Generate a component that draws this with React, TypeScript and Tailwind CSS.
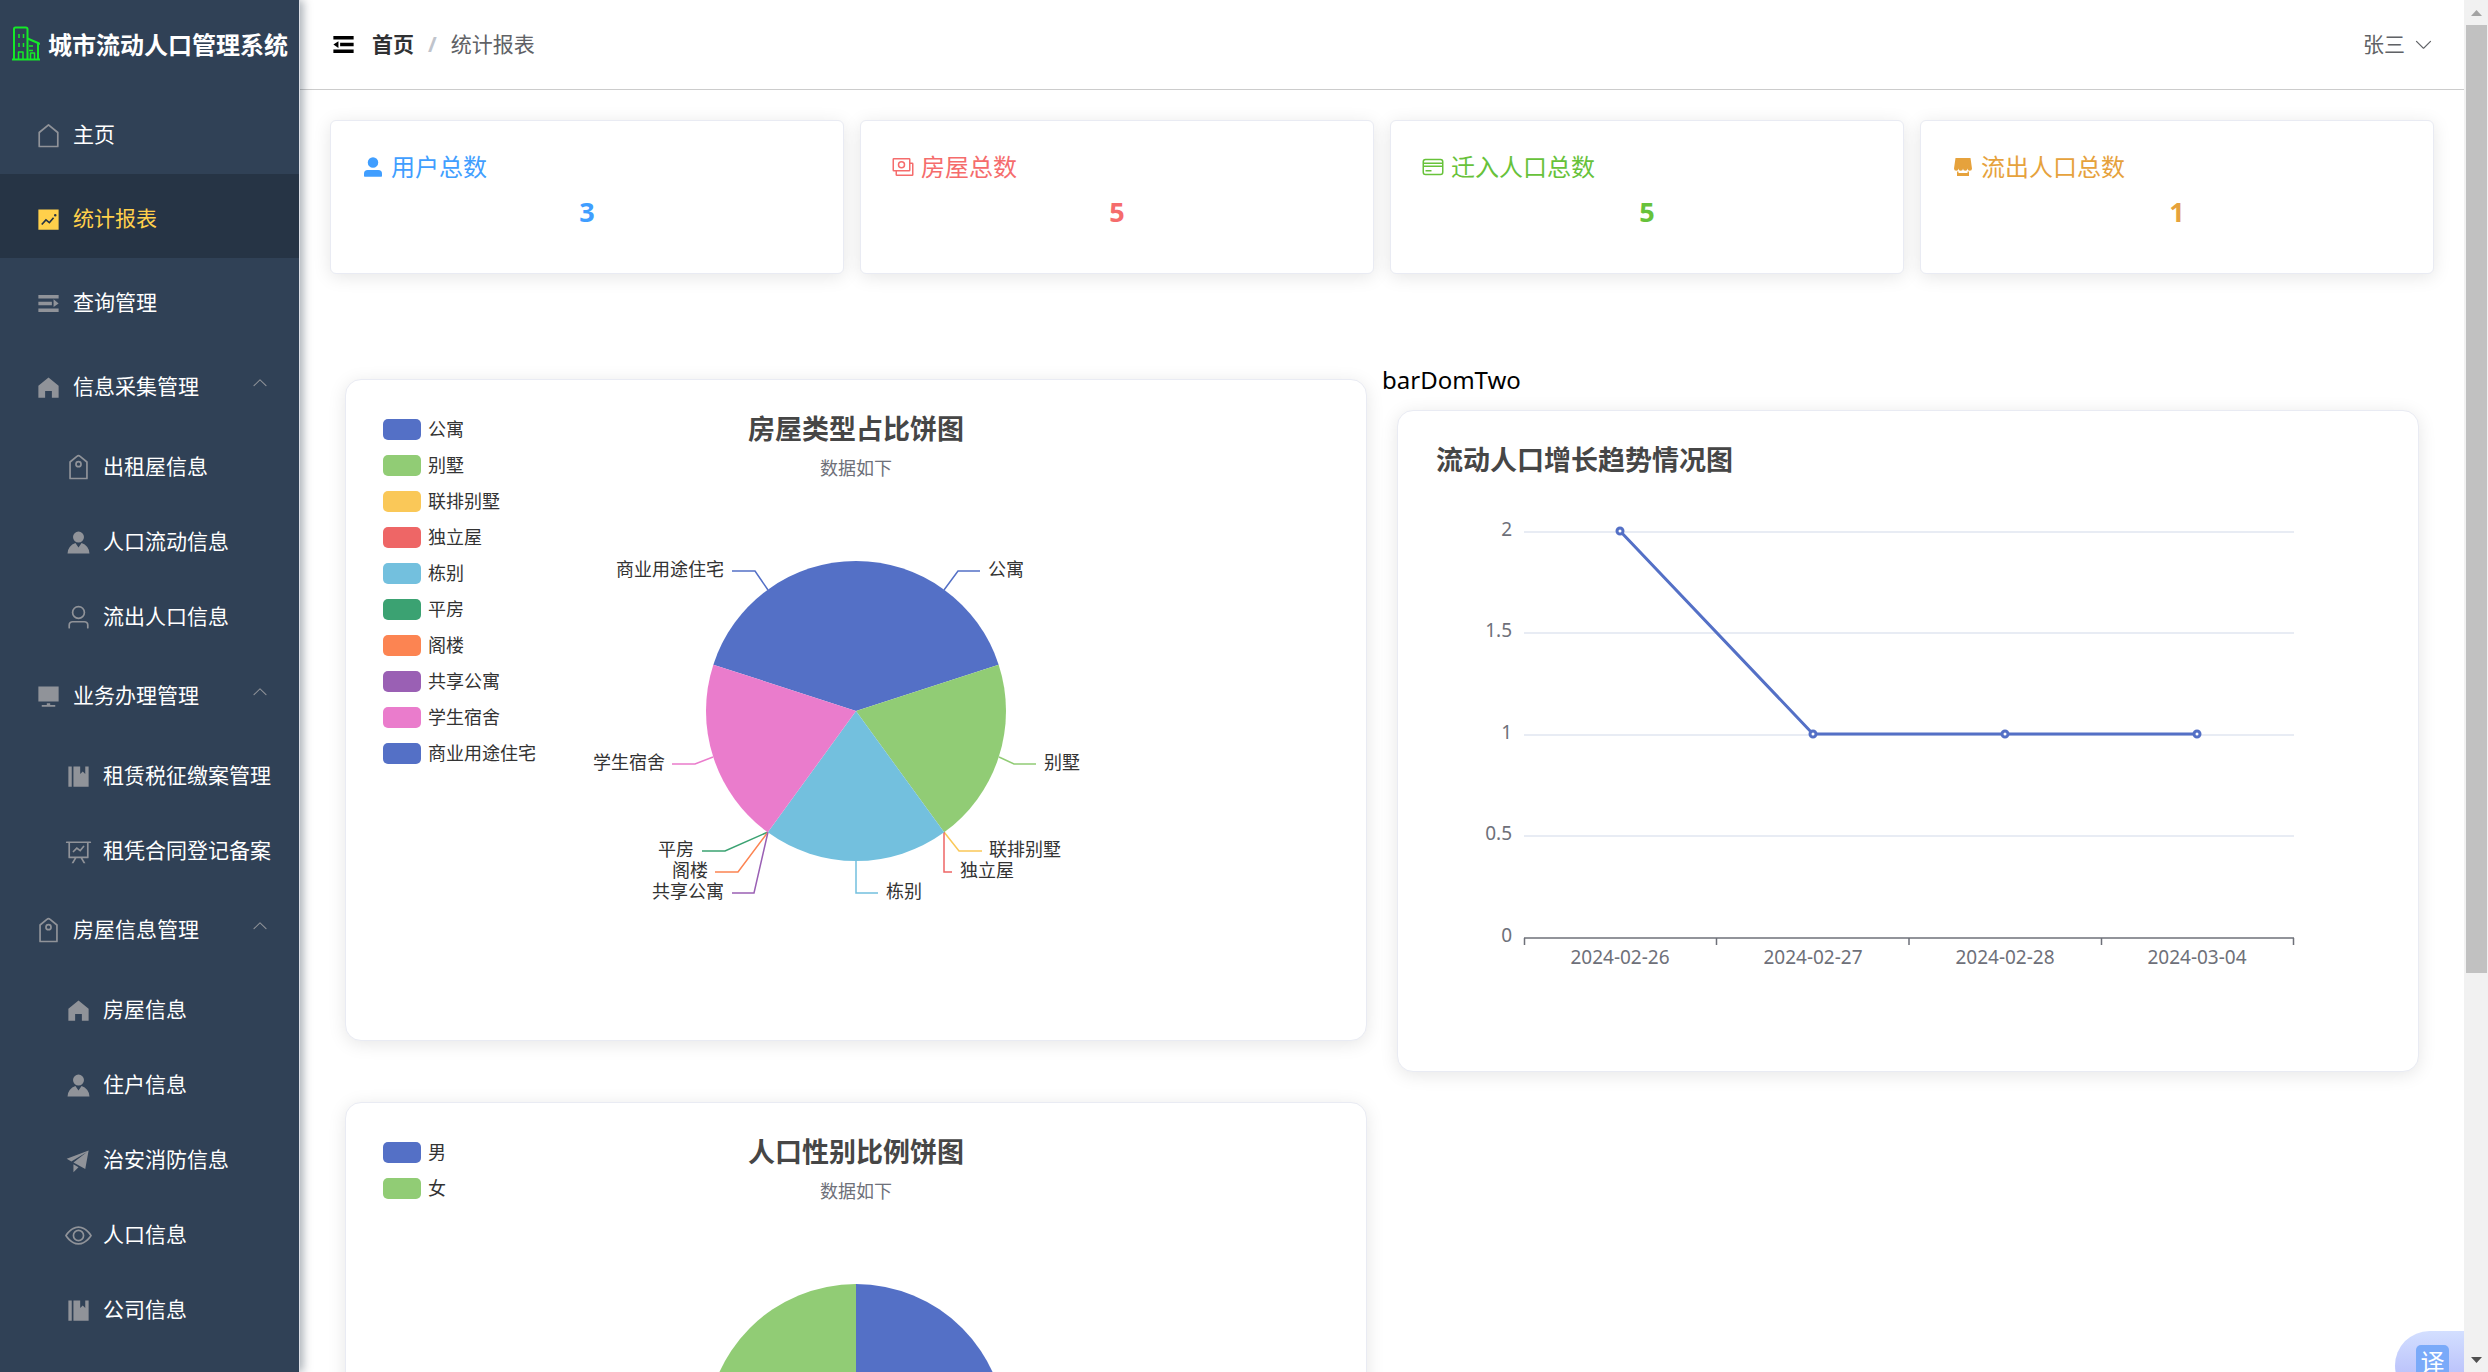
import React from "react";

const FONT = "font-['Noto_Sans','Noto_Sans_CJK_SC',sans-serif]";

const PATHS = {
  house:
    "M192 413.952V896h640V413.952L512 147.328 192 413.952zM139.52 374.4l352-293.312a32 32 0 0 1 40.96 0l352 293.312A32 32 0 0 1 896 398.976V928a32 32 0 0 1-32 32H160a32 32 0 0 1-32-32V398.976a32 32 0 0 1 11.52-24.576z",
  homeFilled: "M512 128 128 447.936V896h255.936V640H640v256h255.936V447.936z",
  trend:
    "M128 896V128h768v768H128zm291.712-327.296 128 102.4 180.16-201.792-47.744-42.624-139.84 156.608-128-102.4-180.16 201.792 47.744 42.624 139.84-156.608zM816 352a48 48 0 1 0-96 0 48 48 0 0 0 96 0z",
  expand:
    "M128 192h768v128H128V192zm0 256h512v128H128V448zm0 256h768v128H128V704zm576-352 192 160-192 128V352z",
  fold: "M896 192H128v128h768V192zm0 256H384v128h512V448zm0 256H128v128h768V704zM320 384 128 512l192 128V384z",
  priceTag:
    "M224 318.336V896h576V318.336L552.512 115.84a64 64 0 0 0-81.024 0L224 318.336zM593.024 66.304l259.2 212.096A32 32 0 0 1 864 303.168V928a32 32 0 0 1-32 32H192a32 32 0 0 1-32-32V303.168a32 32 0 0 1 11.712-24.768l259.2-212.096a128 128 0 0 1 162.112 0zM512 448a64 64 0 1 0 0-128 64 64 0 0 0 0 128zm0 64a128 128 0 1 1 0-256 128 128 0 0 1 0 256z",
  avatar:
    "M628.736 528.896A416 416 0 0 1 928 928H96a415.872 415.872 0 0 1 299.264-399.104L512 704l116.736-175.104zM720 304a208 208 0 1 1-416 0 208 208 0 0 1 416 0z",
  user: "M512 512a192 192 0 1 0 0-384 192 192 0 0 0 0 384zm0 64a256 256 0 1 1 0-512 256 256 0 0 1 0 512zm320 320v-96a96 96 0 0 0-96-96H288a96 96 0 0 0-96 96v96a32 32 0 1 1-64 0v-96a160 160 0 0 1 160-160h448a160 160 0 0 1 160 160v96a32 32 0 1 1-64 0z",
  platform:
    "M448 832v-64h128v64h192v64H256v-64h192zM128 704V128h768v576H128z",
  management:
    "M576 128v288l96-96 96 96V128h128v768H320V128h256zm-448 0h128v768H128V128z",
  dataLine:
    "M359.168 768H160a32 32 0 0 1-32-32V192H64a32 32 0 0 1 0-64h896a32 32 0 1 1 0 64h-64v544a32 32 0 0 1-32 32H665.216l110.848 192h-73.856L591.36 768H433.024L322.176 960H248.32l110.848-192zM832 192H192v512h640V192zM342.656 534.656a32 32 0 1 1-45.312-45.312L444.992 341.76l125.44 94.08L679.04 300.032a32 32 0 1 1 49.92 39.936L581.632 524.224 451.008 426.24 342.656 534.592z",
  promotion:
    "m64 448 832-320-128 704-446.08-243.328L832 192 242.816 545.472 64 448zm256 512V657.024L512 768 320 960z",
  view: "M512 160c320 0 512 352 512 352S832 864 512 864 0 512 0 512s192-352 512-352zm0 64c-225.28 0-384.128 208.064-436.8 288 52.608 79.872 211.456 288 436.8 288 225.28 0 384.128-208.064 436.8-288-52.608-79.872-211.456-288-436.8-288zm0 64a224 224 0 1 1 0 448 224 224 0 0 1 0-448zm0 64a160.192 160.192 0 0 0-160 160c0 88.192 71.744 160 160 160s160-71.808 160-160-71.744-160-160-160z",
  arrowDown:
    "M831.872 340.864 512 652.672 192.128 340.864a30.592 30.592 0 0 0-42.752 0 29.12 29.12 0 0 0 0 41.6L489.664 714.24a32 32 0 0 0 44.672 0l340.288-331.712a29.12 29.12 0 0 0 0-41.728 30.592 30.592 0 0 0-42.752 0z",
  userFilled:
    "M288 320a224 224 0 1 0 448 0 224 224 0 1 0-448 0zm544 608H160a32 32 0 0 1-32-32v-96a160 160 0 0 1 160-160h448a160 160 0 0 1 160 160v96a32 32 0 0 1-32 32z",
  shop: "M704 704h64v192H256V704h64v64h384v-64zm188.544-152.192C894.528 559.616 896 567.616 896 576a96 96 0 1 1-192 0 96 96 0 1 1-192 0 96 96 0 1 1-192 0 96 96 0 1 1-192 0c0-8.384 1.408-16.384 3.392-24.192L192 128h640l60.544 423.808z",
};

type IconName = keyof typeof PATHS;

function Icon({ name, className }: { name: IconName; className: string }) {
  return (
    <svg viewBox="0 0 1024 1024" fill="currentColor" aria-hidden="true" className={className}>
      <path d={PATHS[name]} />
    </svg>
  );
}

function MoneyIcon() {
  return (
    <svg viewBox="0 0 1024 1024" fill="none" stroke="currentColor" strokeWidth="64" aria-hidden="true" className="size-6 shrink-0">
      <rect x="96" y="160" width="704" height="512" rx="24" />
      <circle cx="448" cy="416" r="128" />
      <path d="M224 680v160a24 24 0 0 0 24 24h656a24 24 0 0 0 24-24V376a24 24 0 0 0-24-24H808" />
    </svg>
  );
}

function CardIcon() {
  return (
    <svg viewBox="0 0 1024 1024" fill="none" stroke="currentColor" strokeWidth="64" aria-hidden="true" className="size-6 shrink-0">
      <rect x="96" y="192" width="832" height="640" rx="96" />
      <path d="M96 352h832M96 480h832M192 672h256" />
    </svg>
  );
}

function Logo() {
  return (
    <svg viewBox="0 0 28 35" fill="none" stroke="#14ea28" strokeWidth="2" strokeLinejoin="round" aria-hidden="true" className="mb-[3px] h-[35px] w-7 shrink-0">
      <path d="M0 33.500h28" />
      <path d="M2 33V3a1.500 1.500 0 0 1 1.500-1.500h10.500a1.500 1.500 0 0 1 1.500 1.500v30" />
      <path d="M15.500 12.500 26 17v16" />
      <path d="M26 17l2 1" />
      <path d="M6.500 33v-7h4.500v7M18.500 33v-6h4v6" strokeWidth="1.500" />
      <path d="M7 8v4M11.500 8v4M7 17v4M11.500 17v4M17 20h4M17 24.500h4" strokeWidth="1.500" />
    </svg>
  );
}

type Leaf = { label: string; icon: IconName; active?: boolean };
type Entry = Leaf & { children?: Leaf[] };

const MENU: Entry[] = [
  { label: "主页", icon: "house" },
  { label: "统计报表", icon: "trend", active: true },
  { label: "查询管理", icon: "expand" },
  {
    label: "信息采集管理",
    icon: "homeFilled",
    children: [
      { label: "出租屋信息", icon: "priceTag" },
      { label: "人口流动信息", icon: "avatar" },
      { label: "流出人口信息", icon: "user" },
    ],
  },
  {
    label: "业务办理管理",
    icon: "platform",
    children: [
      { label: "租赁税征缴案管理", icon: "management" },
      { label: "租凭合同登记备案", icon: "dataLine" },
    ],
  },
  {
    label: "房屋信息管理",
    icon: "priceTag",
    children: [
      { label: "房屋信息", icon: "homeFilled" },
      { label: "住户信息", icon: "avatar" },
      { label: "治安消防信息", icon: "promotion" },
      { label: "人口信息", icon: "view" },
      { label: "公司信息", icon: "management" },
    ],
  },
];

function MenuLabel({ icon, label, active }: Leaf) {
  return (
    <>
      <span className="flex w-9 shrink-0 justify-center">
        <Icon name={icon} className={active ? "size-[27px]" : "size-[27px] text-[#909399]"} />
      </span>
      <span className="ml-[7px] whitespace-nowrap">{label}</span>
    </>
  );
}

function Sidebar() {
  return (
    <aside className="z-10 w-[300px] shrink-0 overflow-hidden border-r border-[#dcdfe6] bg-[#304156] text-[21px] text-white shadow-[3px_0_9px_rgba(0,21,41,0.35)]">
      <div className="flex h-[90px] items-center gap-2 pl-3">
        <Logo />
        <h1 className="text-2xl font-bold whitespace-nowrap">城市流动人口管理系统</h1>
      </div>
      <nav>
        <ul>
          {MENU.map((entry) => (
            <li key={entry.label}>
              {entry.children ? (
                <>
                  <button type="button" aria-expanded="true" className="flex h-[84px] w-full items-center px-[30px] pt-[6px] text-left">
                    <MenuLabel {...entry} />
                    <Icon name="arrowDown" className="mb-2 ml-auto size-[18px] rotate-180 text-[#909399]" />
                  </button>
                  <ul>
                    {entry.children.map((leaf) => (
                      <li key={leaf.label}>
                        <a href="#" className="flex h-[75px] items-center pt-[7px] pl-[60px]">
                          <MenuLabel {...leaf} />
                        </a>
                      </li>
                    ))}
                  </ul>
                </>
              ) : (
                <a
                  href="#"
                  className={
                    entry.active
                      ? "flex h-[84px] items-center bg-[#263445] px-[30px] pt-[6px] text-[#ffd04b]"
                      : "flex h-[84px] items-center px-[30px] pt-[6px]"
                  }
                >
                  <MenuLabel {...entry} />
                </a>
              )}
            </li>
          ))}
        </ul>
      </nav>
    </aside>
  );
}

function Header() {
  return (
    <header className="flex h-[90px] items-center justify-between border-b border-[#ccc] px-[30px] text-[21px] text-[#606266]">
      <div className="flex items-center">
        <button type="button" aria-label="折叠菜单" className="text-black">
          <Icon name="fold" className="size-[27px]" />
        </button>
        <nav className="ml-[15px] flex items-center">
          <a href="#" className="font-bold text-[#303133]">首页</a>
          <span className="mx-[14px] font-bold text-[#c0c4cc]">/</span>
          <span>统计报表</span>
        </nav>
      </div>
      <button type="button" className="flex items-center gap-2">
        张三
        <Icon name="arrowDown" className="size-[21px]" />
      </button>
    </header>
  );
}

const STATS = [
  { label: "用户总数", value: 3, color: "text-[#409eff]", icon: <Icon name="userFilled" className="size-6 shrink-0" /> },
  { label: "房屋总数", value: 5, color: "text-[#f56c6c]", icon: <MoneyIcon /> },
  { label: "迁入人口总数", value: 5, color: "text-[#67c23a]", icon: <CardIcon /> },
  { label: "流出人口总数", value: 1, color: "text-[#e6a23c]", icon: <Icon name="shop" className="size-6 shrink-0" /> },
];

function Stats() {
  return (
    <section className="grid grid-cols-4 gap-4">
      {STATS.map((s) => (
        <div key={s.label} className="min-h-[154px] rounded-md border border-[#e9ebf3] bg-white p-[30px] pb-0 shadow-[0_3px_18px_rgba(0,0,0,0.1)]">
          <div className={s.color}>
            <p className="flex items-center gap-[6px] text-2xl leading-[31px]">
              {s.icon}
              {s.label}
            </p>
            <p className="mt-3 text-center text-[27px] leading-9 font-bold">{s.value}</p>
          </div>
        </div>
      ))}
    </section>
  );
}

function ChartCard({ children }: { children: React.ReactNode }) {
  return (
    <article className="m-[15px] min-h-[662px] rounded-2xl border border-[#e9ebf3] bg-white px-[31px] py-[31px] shadow-[0_3px_18px_rgba(0,0,0,0.1)]">
      {children}
    </article>
  );
}

type LegendItem = { label: string; color: string };

function PieCard({ title, legend, children }: { title: string; legend: LegendItem[]; children: React.ReactNode }) {
  return (
    <ChartCard>
      <div className="grid">
        <ul className="z-10 col-start-1 row-start-1 self-start justify-self-start pl-[6px]">
          {legend.map((item) => (
            <li key={item.label} className="flex h-9 items-center gap-[7px] text-lg leading-6 text-[#333]">
              <span className="h-[21px] w-[38px] rounded-[5px]" style={{ backgroundColor: item.color }} />
              {item.label}
            </li>
          ))}
        </ul>
        <div className="col-start-1 row-start-1 flex flex-col items-center">
          <h2 className="text-[27px] leading-9 font-bold text-[#464646]">{title}</h2>
          <p className="mt-2 text-lg leading-[26px] text-[#6e7079]">数据如下</p>
          <svg viewBox="-290 -210 580 420" className="mt-5 h-[420px] w-[580px] text-lg">
            {children}
          </svg>
        </div>
      </div>
    </ChartCard>
  );
}

const HOUSE_LEGEND: LegendItem[] = [
  { label: "公寓", color: "#5470c6" },
  { label: "别墅", color: "#91cc75" },
  { label: "联排别墅", color: "#fac858" },
  { label: "独立屋", color: "#ee6666" },
  { label: "栋别", color: "#73c0de" },
  { label: "平房", color: "#3ba272" },
  { label: "阁楼", color: "#fc8452" },
  { label: "共享公寓", color: "#9a60b4" },
  { label: "学生宿舍", color: "#ea7ccc" },
  { label: "商业用途住宅", color: "#5470c6" },
];

const SLICES = [
  { from: -72, to: 72, color: "#5470c6" },
  { from: 72, to: 144, color: "#91cc75" },
  { from: 144, to: 216, color: "#73c0de" },
  { from: 216, to: 288, color: "#ea7ccc" },
];

const LEADERS = [
  { label: "公寓", color: "#5470c6", points: "88,-121 102,-140 124,-140", x: 132, y: -141, end: false },
  { label: "别墅", color: "#91cc75", points: "143,46 158,53 180,53", x: 188, y: 52, end: false },
  { label: "联排别墅", color: "#fac858", points: "88,121 103,140 126,140", x: 133, y: 139, end: false },
  { label: "独立屋", color: "#ee6666", points: "88,121 88,161 96,161", x: 104, y: 160, end: false },
  { label: "栋别", color: "#73c0de", points: "0,150 0,182 22,182", x: 30, y: 181, end: false },
  { label: "平房", color: "#3ba272", points: "-88,121 -131,140 -154,140", x: -162, y: 139, end: true },
  { label: "阁楼", color: "#fc8452", points: "-88,121 -118,161 -141,161", x: -148, y: 160, end: true },
  { label: "共享公寓", color: "#9a60b4", points: "-88,121 -102,182 -124,182", x: -132, y: 181, end: true },
  { label: "学生宿舍", color: "#ea7ccc", points: "-143,46 -161,53 -184,53", x: -191, y: 52, end: true },
  { label: "商业用途住宅", color: "#5470c6", points: "-88,-121 -101,-140 -124,-140", x: -132, y: -141, end: true },
];

function slicePath(from: number, to: number) {
  const at = (deg: number) => {
    const a = (deg * Math.PI) / 180;
    return `${(150 * Math.sin(a)).toFixed(2)} ${(-150 * Math.cos(a)).toFixed(2)}`;
  };
  return `M0 0L${at(from)}A150 150 0 0 1 ${at(to)}Z`;
}

function HousePie() {
  return (
    <PieCard title="房屋类型占比饼图" legend={HOUSE_LEGEND}>
      {LEADERS.map((l) => (
        <g key={l.label}>
          <polyline points={l.points} fill="none" stroke={l.color} strokeWidth="1.5" />
          <text x={l.x} y={l.y + 6} textAnchor={l.end ? "end" : "start"} fill="#333">
            {l.label}
          </text>
        </g>
      ))}
      {SLICES.map((s) => (
        <path key={s.color} d={slicePath(s.from, s.to)} fill={s.color} />
      ))}
    </PieCard>
  );
}

function GenderPie() {
  return (
    <PieCard
      title="人口性别比例饼图"
      legend={[
        { label: "男", color: "#5470c6" },
        { label: "女", color: "#91cc75" },
      ]}
    >
      <path d={slicePath(0, 180)} fill="#5470c6" />
      <path d={slicePath(180, 360)} fill="#91cc75" />
    </PieCard>
  );
}

const GRID_ROWS = [
  { label: "2", y: 54 },
  { label: "1.5", y: 155 },
  { label: "1", y: 257 },
  { label: "0.5", y: 358 },
  { label: "0", y: 460 },
];

const DAYS = [
  { label: "2024-02-26", x: 191, y: 53 },
  { label: "2024-02-27", x: 384, y: 256 },
  { label: "2024-02-28", x: 576, y: 256 },
  { label: "2024-03-04", x: 768, y: 256 },
];

function TrendCard() {
  return (
    <ChartCard>
      <h2 className="px-[7px] text-[27px] leading-9 font-bold text-[#464646]">流动人口增长趋势情况图</h2>
      <svg viewBox="0 0 958 562" className="w-full text-[19px]">
        {GRID_ROWS.map((r) => (
          <g key={r.label}>
            <line x1="95" x2="865" y1={r.y} y2={r.y} stroke={r.y === 460 ? "#6e7079" : "#e0e6f1"} strokeWidth="1.5" />
            <text x="83" y={r.y + 4} textAnchor="end" fill="#6e7079">
              {r.label}
            </text>
          </g>
        ))}
        <path d="M95.500 460v7M287.500 460v7M480 460v7M672.500 460v7M864.500 460v7" stroke="#6e7079" strokeWidth="1.500" />
        <polyline points={DAYS.map((d) => `${d.x},${d.y}`).join(" ")} fill="none" stroke="#5470c6" strokeWidth="3" strokeLinejoin="bevel" />
        {DAYS.map((d) => (
          <g key={d.label}>
            <circle cx={d.x} cy={d.y} r="3" fill="#fff" stroke="#5470c6" strokeWidth="3" />
            <text x={d.x} y="486" textAnchor="middle" fill="#6e7079">
              {d.label}
            </text>
          </g>
        ))}
      </svg>
    </ChartCard>
  );
}

function ScrollRail() {
  return (
    <div aria-hidden="true" className="flex w-6 shrink-0 flex-col items-center bg-[#f1f1f1]">
      <svg viewBox="0 0 24 25" className="h-[25px] w-6" fill="#a3a3a3">
        <path d="M12.500 10 18 16H7z" />
      </svg>
      <div className="h-[69.1%] w-[21px] bg-[#c1c1c1]" />
      <svg viewBox="0 0 24 25" className="mt-auto h-[25px] w-6" fill="#505050">
        <path d="M7 10h11l-5.500 6z" />
      </svg>
    </div>
  );
}

export default function App() {
  return (
    <div className={`${FONT} flex h-screen overflow-hidden bg-white text-black`}>
      <Sidebar />
      <div className="relative min-w-0 flex-1 overflow-hidden">
        <Header />
        <main className="px-[30px] pt-[30px]">
          <Stats />
          <section className="mt-[90px] grid grid-cols-2 items-start">
            <HousePie />
            <div>
              <p className="text-2xl leading-[31px]">barDomTwo</p>
              <TrendCard />
            </div>
            <GenderPie />
          </section>
        </main>
        <button
          type="button"
          aria-label="翻译"
          className="absolute right-0 -bottom-7 flex h-[69px] w-[69px] items-start rounded-l-full bg-linear-to-b from-[#d3dfff] to-[#aeb2f8] pt-[14px] pl-[21px]"
        >
          <span className="flex h-[33px] w-[33px] items-center justify-center rounded-[5px] bg-[#7aaaf9] text-2xl leading-8 text-white">译</span>
        </button>
      </div>
      <ScrollRail />
    </div>
  );
}
